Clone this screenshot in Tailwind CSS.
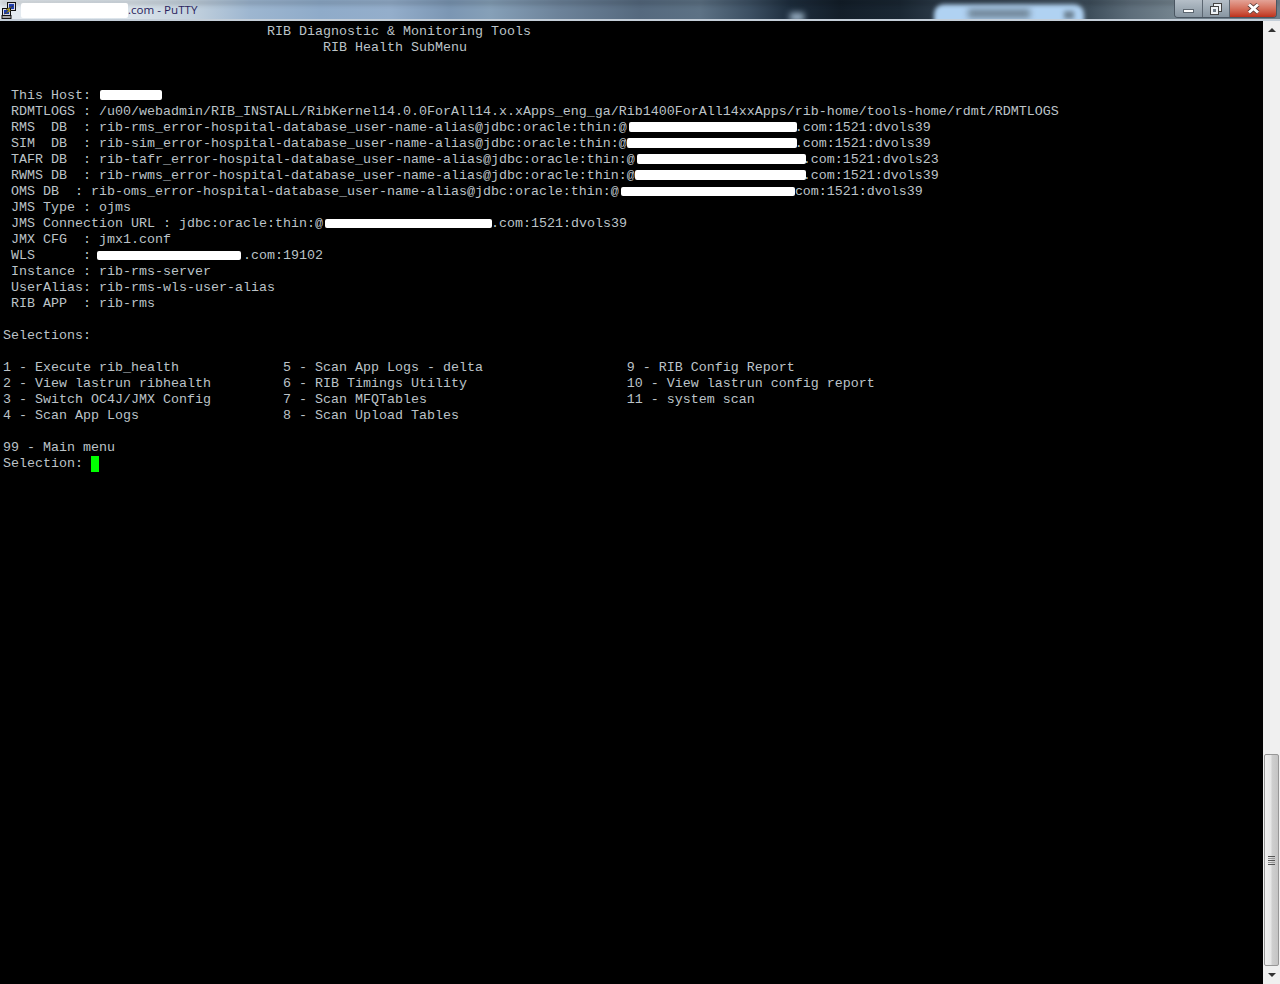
<!DOCTYPE html>
<html lang="en">
  <head>
    <title>PuTTY</title>
    <script src="https://cdn.jsdelivr.net/npm/@tailwindcss/browser@4"></script>
  </head>
  <body class="h-[984px] w-[1280px] overflow-hidden bg-black">
    <!-- Title bar -->
    <div class="relative h-[21px] overflow-hidden border-b-2 border-[#c4ced8] bg-[linear-gradient(90deg,#e6ecf1_0px,#dbe4eb_130px,#c4d2de_190px,#9db6d0_250px,#8fabc9_320px,#94aecb_390px,#7b96b3_450px,#86a0b8_490px,#6c8299_560px,#55697e_640px,#5d7285_700px,#3c4f62_750px,#1e2e3e_790px,#131e29_840px,#1a2733_900px,#2a3846_935px,#3e4e5b_1090px,#5d6d7a_1130px,#74848f_1175px,#6f7f8b_1280px)]">
      <div class="absolute left-[934px] top-[4px] h-[24px] w-[150px] rounded-t-[10px] bg-[#b0d2f2] blur-[2px]"></div>
      <div class="absolute left-[968px] top-[9px] h-[9px] w-[62px] bg-[#6f8496] blur-[3px]"></div>
      <div class="absolute left-[1064px] top-[11px] h-[8px] w-[10px] bg-[#6f8496] blur-[2px]"></div>
      <div class="absolute left-[790px] top-[13px] h-[8px] w-[14px] bg-[#9fb6ca] blur-[3px]"></div>
      <div class="absolute left-[0px] top-[0px] h-[5px] w-[1280px] bg-black/15 blur-[2px]"></div>
      <div class="relative flex h-[19px] items-center">
        <svg class="ml-[1px] h-[19px] w-[16px]" viewBox="0 0 16 19">
          <rect x="6.5" y="2.5" width="8" height="8" fill="#d9d9e6" stroke="#111" />
          <rect x="8" y="4" width="5" height="5" fill="#1f3fb0" />
          <rect x="1.5" y="8.5" width="8" height="7" fill="#d9d9e6" stroke="#111" />
          <rect x="3" y="10" width="5" height="4" fill="#1f3fb0" />
          <rect x="1" y="15.5" width="9" height="3" fill="#a8a8a8" stroke="#111" />
          <path d="M12 6 L5 9.5 L7.5 10.5 L3.5 14 L10 10.5 L7.5 9.5 Z" fill="#f5de12" stroke="#222" stroke-width="0.5" />
        </svg>
        <div class="ml-[4px] h-[15px] w-[107px] translate-y-[1px] rounded-[2px] bg-white blur-[0.5px]"></div>
        <span class="font-['Open_Sans',sans-serif] text-[11.6px] text-[#2a1f5e]">.com - PuTTY</span>
      </div>
      <!-- Caption buttons -->
      <div class="absolute right-[3px] top-0 flex h-[18px] w-[103px] overflow-hidden rounded-b-[4px] border border-t-0 border-[#4a5561]">
        <div class="flex w-[28px] items-end justify-center border-r border-[#5c6772] bg-gradient-to-b from-[#b5bfc8] to-[#8896a2] pb-[4px]">
          <div class="h-[4px] w-[11px] border border-[#5c6670] bg-white"></div>
        </div>
        <div class="flex w-[27px] items-center justify-center border-r border-[#5c6772] bg-gradient-to-b from-[#b5bfc8] to-[#8896a2]">
          <svg class="h-[12px] w-[12px]" viewBox="0 0 12 12">
            <rect x="3.5" y="0.5" width="8" height="8" fill="#eef2f5" stroke="#444" />
            <rect x="0.5" y="3.5" width="8" height="8" fill="#eef2f5" stroke="#444" />
            <rect x="3" y="6" width="3" height="3" fill="#6e7a86" />
          </svg>
        </div>
        <div class="flex flex-1 items-center justify-center bg-gradient-to-b from-[#e3a397] via-[#d5705c] to-[#bd2f1a]">
          <svg class="h-[11px] w-[15px]" viewBox="0 0 15 11">
            <path d="M3 1.5 L12 9.5 M12 1.5 L3 9.5" stroke="#5a3a36" stroke-width="4.4" />
            <path d="M3 1.5 L12 9.5 M12 1.5 L3 9.5" stroke="#fff" stroke-width="3" />
          </svg>
        </div>
      </div>
    </div>

    <div class="flex h-[963px]">
      <!-- Terminal -->
      <div class="flex h-full w-[1263px] flex-col overflow-hidden whitespace-pre bg-black pl-[3px] pt-[3px] font-['Liberation_Mono',monospace] text-[13.34px] leading-[16px] text-[#bcc3c8]">
        <div>                                 RIB Diagnostic &amp; Monitoring Tools</div>
        <div>                                        RIB Health SubMenu</div>
        <div class="h-[32px]"></div>
        <div> This Host: <span class="relative inline-block h-[16px] w-[64px] align-top"><span class="absolute left-[1px] top-[2px] h-[10px] w-[62px] rounded-[2px] bg-white"></span></span></div>
        <div> RDMTLOGS : /u00/webadmin/RIB_INSTALL/RibKernel14.0.0ForAll14.x.xApps_eng_ga/Rib1400ForAll14xxApps/rib-home/tools-home/rdmt/RDMTLOGS</div>
        <div> RMS  DB  : rib-rms_error-hospital-database_user-name-alias@jdbc:oracle:thin:@<span class="relative inline-block h-[16px] w-[168px] align-top"><span class="absolute left-[2px] top-[2px] h-[10px] w-[168px] rounded-[2px] bg-white"></span></span>.com:1521:dvols39</div>
        <div> SIM  DB  : rib-sim_error-hospital-database_user-name-alias@jdbc:oracle:thin:@<span class="relative inline-block h-[16px] w-[168px] align-top"><span class="absolute left-[0px] top-[2px] h-[10px] w-[170px] rounded-[2px] bg-white"></span></span>.com:1521:dvols39</div>
        <div> TAFR DB  : rib-tafr_error-hospital-database_user-name-alias@jdbc:oracle:thin:@<span class="relative inline-block h-[16px] w-[168px] align-top"><span class="absolute left-[2px] top-[2px] h-[10px] w-[169px] rounded-[2px] bg-white"></span></span>.com:1521:dvols23</div>
        <div> RWMS DB  : rib-rwms_error-hospital-database_user-name-alias@jdbc:oracle:thin:@<span class="relative inline-block h-[16px] w-[168px] align-top"><span class="absolute left-[0px] top-[2px] h-[10px] w-[171px] rounded-[2px] bg-white"></span></span>.com:1521:dvols39</div>
        <div> OMS DB  : rib-oms_error-hospital-database_user-name-alias@jdbc:oracle:thin:@<span class="relative inline-block h-[16px] w-[176px] align-top"><span class="absolute left-[2px] top-[3px] h-[9px] w-[174px] rounded-[2px] bg-white"></span></span>com:1521:dvols39</div>
        <div> JMS Type : ojms</div>
        <div> JMS Connection URL : jdbc:oracle:thin:@<span class="relative inline-block h-[16px] w-[168px] align-top"><span class="absolute left-[2px] top-[3px] h-[9px] w-[167px] rounded-[2px] bg-white"></span></span>.com:1521:dvols39</div>
        <div> JMX CFG  : jmx1.conf</div>
        <div> WLS      : <span class="relative inline-block h-[16px] w-[144px] align-top"><span class="absolute left-[-2px] top-[3px] h-[9px] w-[144px] rounded-[2px] bg-white"></span></span>.com:19102</div>
        <div> Instance : rib-rms-server</div>
        <div> UserAlias: rib-rms-wls-user-alias</div>
        <div> RIB APP  : rib-rms</div>
        <div class="h-[16px]"></div>
        <div>Selections:</div>
        <div class="h-[16px]"></div>
        <div>1 - Execute rib_health             5 - Scan App Logs - delta                  9 - RIB Config Report</div>
        <div>2 - View lastrun ribhealth         6 - RIB Timings Utility                    10 - View lastrun config report</div>
        <div>3 - Switch OC4J/JMX Config         7 - Scan MFQTables                         11 - system scan</div>
        <div>4 - Scan App Logs                  8 - Scan Upload Tables</div>
        <div class="h-[16px]"></div>
        <div>99 - Main menu</div>
        <div>Selection: <span class="inline-block h-[16px] w-[8px] bg-[#00ff00] align-top"></span></div>
      </div>

      <!-- Scrollbar -->
      <div class="flex h-full w-[17px] flex-col bg-[#f0f0f0]">
        <div class="flex h-[17px] items-center justify-center">
          <div class="h-0 w-0 border-x-[4px] border-b-[4px] border-x-transparent border-b-[#333]"></div>
        </div>
        <div class="flex-1"></div>
        <div class="mx-[1px] flex h-[212px] flex-col items-center justify-center gap-[1px] rounded-[2px] border border-[#979797] bg-[linear-gradient(90deg,#f0f0f0_0%,#e6e6e6_45%,#cfcfcf_55%,#c4c4c4_100%)]">
          <div class="h-[1px] w-[7px] bg-[#555]"></div>
          <div class="h-[1px] w-[7px] bg-[#999]"></div>
          <div class="h-[1px] w-[7px] bg-[#555]"></div>
          <div class="h-[1px] w-[7px] bg-[#999]"></div>
          <div class="h-[1px] w-[7px] bg-[#555]"></div>
        </div>
        <div class="flex h-[18px] items-center justify-center">
          <div class="h-0 w-0 border-x-[4px] border-t-[4px] border-x-transparent border-t-[#333]"></div>
        </div>
      </div>
    </div>
  </body>
</html>
